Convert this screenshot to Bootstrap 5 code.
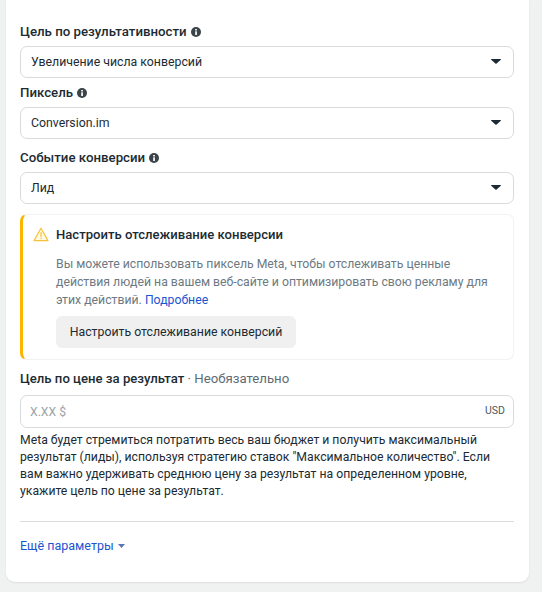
<!DOCTYPE html>
<html lang="ru">
<head>
<meta charset="utf-8">
<title>Настройки</title>
<link href="https://cdn.jsdelivr.net/npm/bootstrap@5.3.0/dist/css/bootstrap.min.css" rel="stylesheet">
<style>
html,body{height:592px;overflow:hidden}
body{background:#f0f2f1;font-family:Roboto,"Liberation Sans",sans-serif;font-size:12px;color:#1c2b33;line-height:17px}
.panel{margin:0 13px 0 6px;height:582px;background:#fff;border-radius:0 0 9px 9px;box-shadow:0 1px 2px rgba(0,0,0,.08);padding:24px 15px 0 14px}
.fld-label{font-size:13.25px;font-weight:500;line-height:16px;color:#1c2b33;gap:4px}
.fld-label .opt{font-weight:400;color:#5f6b73;font-size:13.2px}
.l4{font-size:13.15px}
.info-ico{width:10px;height:10px;flex:none}
.sel-box{height:32px;border:1px solid #d9dadb;border-radius:7px;padding:0 12px 0 10px;color:#1c2b33;font-size:12.3px;background:#fff}
.caret-ico{width:10px;height:5px;flex:none;margin-bottom:1px}
.f1{margin-top:6px}
.l2{margin-top:7px}
.l3{margin-top:11px}
.warn-box{margin-top:10px;height:146px;border:1px solid #f1f2f2;border-left:3px solid #fbb500;border-radius:7px;padding:11px 12px 0 10px;box-shadow:0 0 1px rgba(0,0,0,.03)}
.warn-head{gap:7px}
.warn-ico{width:16px;height:15px;flex:none}
.warn-title{font-size:13.1px;font-weight:500;color:#1c2b33;line-height:17px}
.warn-text{margin:12px 0 0 23px;font-size:12.25px;line-height:18px;color:#6d7a82}
.warn-text a,.more-link{color:#1a55d1;text-decoration:none}
.act-btn{margin:7px 0 0 23px;height:32px;width:240px;background:#f0f0f0;border:0;border-radius:6px;font-size:12.3px;color:#1c2b33;padding:0}
.l4{margin-top:11px}
.price-box{margin-top:8px;height:33px;border:1px solid #d9dadb;border-radius:7px;padding:0 8px 0 9px;font-size:12.2px}
.ph{color:#9aa3a9;margin-top:1px}
.cur{font-size:10.5px;color:#4b5a63;margin-bottom:2px}
.desc{margin:4px 0 0;font-size:12.22px;line-height:17px;color:#1c2b33}
.sep{margin:21px 0 0;border:0;border-top:1px solid #dcdddd;opacity:1}
.more-link{display:inline-flex;align-items:center;gap:4px;margin-top:15px;font-size:12.5px}
</style>
</head>
<body>
<main class="panel">
  <svg width="0" height="0" class="position-absolute">
    <defs>
      <symbol id="i-info" viewBox="0 0 10 10"><circle cx="5" cy="5" r="5" fill="#3a4449"/><rect x="4.2" y="4.3" width="1.7" height="3.7" fill="#fff"/><rect x="4.2" y="2" width="1.7" height="1.5" fill="#fff"/></symbol>
      <symbol id="i-caret" viewBox="0 0 10 5"><path d="M.6 0h8.8c.5 0 .7.4.4.8L5.6 4.6c-.3.3-.9.3-1.2 0L.2.8C-.1.4.1 0 .6 0z" fill="#1c2b33"/></symbol>
    </defs>
  </svg>

  <div class="fld-label d-flex align-items-center">Цель по результативности <svg class="info-ico"><use href="#i-info"/></svg></div>
  <div class="sel-box f1 d-flex align-items-center justify-content-between">Увеличение числа конверсий <svg class="caret-ico"><use href="#i-caret"/></svg></div>

  <div class="fld-label l2 d-flex align-items-center">Пиксель <svg class="info-ico"><use href="#i-info"/></svg></div>
  <div class="sel-box f1 d-flex align-items-center justify-content-between">Conversion.im <svg class="caret-ico"><use href="#i-caret"/></svg></div>

  <div class="fld-label l3 d-flex align-items-center">Событие конверсии <svg class="info-ico"><use href="#i-info"/></svg></div>
  <div class="sel-box f1 d-flex align-items-center justify-content-between">Лид <svg class="caret-ico"><use href="#i-caret"/></svg></div>

  <section class="warn-box">
    <div class="warn-head d-flex align-items-center">
      <svg class="warn-ico" viewBox="0 0 16 15"><path d="M8 1.2 15 13.6H1z" fill="#fff9e6" stroke="#f5c33b" stroke-width="1.2" stroke-linejoin="round"/><rect x="7.4" y="5.2" width="1.2" height="4.8" fill="#f5c33b"/><rect x="7.4" y="10.8" width="1.2" height="1.3" fill="#f5c33b"/></svg>
      <div class="warn-title">Настроить отслеживание конверсии</div>
    </div>
    <p class="warn-text">Вы можете использовать пиксель Meta, чтобы отслеживать ценные действия людей на вашем веб-сайте и оптимизировать свою рекламу для этих действий. <a href="#">Подробнее</a></p>
    <button type="button" class="btn act-btn">Настроить отслеживание конверсий</button>
  </section>

  <div class="fld-label l4">Цель по цене за результат <span class="opt">· Необязательно</span></div>
  <div class="price-box d-flex align-items-center justify-content-between"><span class="ph">X.XX $</span><span class="cur">USD</span></div>
  <p class="desc">Meta будет стремиться потратить весь ваш бюджет и получить максимальный результат (лиды), используя стратегию ставок "Максимальное количество". Если вам важно удерживать среднюю цену за результат на определенном уровне, укажите цель по цене за результат.</p>
  <hr class="sep">
  <a href="#" class="more-link">Ещё параметры <svg width="7" height="4" viewBox="0 0 7 4"><path d="M0 0h7L3.5 4z" fill="#5a74b5"/></svg></a>
</main>
<script src="https://cdn.jsdelivr.net/npm/bootstrap@5.3.0/dist/js/bootstrap.bundle.min.js"></script>
</body>
</html>
